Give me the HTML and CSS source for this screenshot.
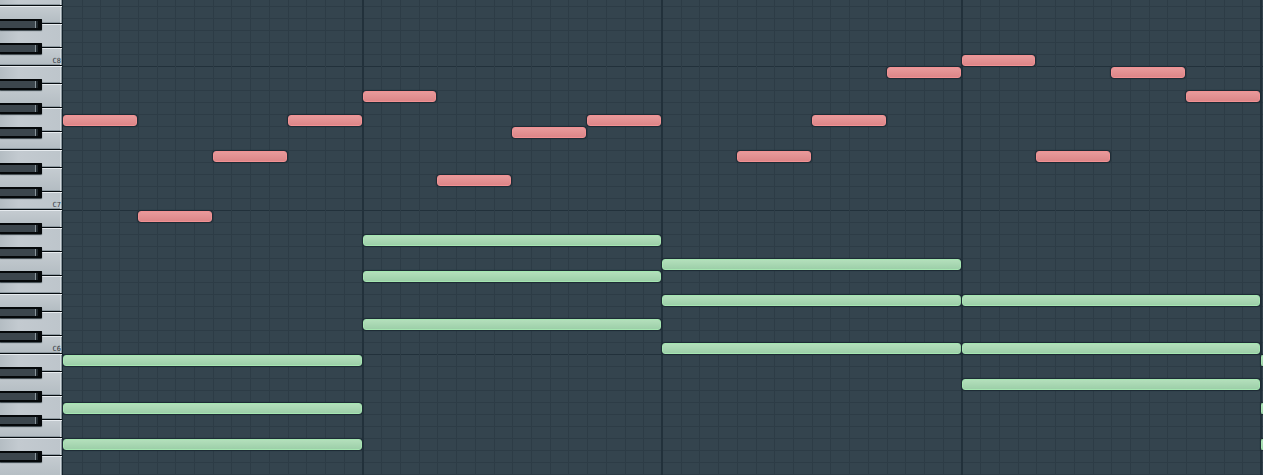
FILE: index.html
```html
<!DOCTYPE html>
<html lang="en">
<head>
<meta charset="utf-8">
<meta name="viewport" content="width=device-width, initial-scale=1">
<title>Piano roll</title>
<link rel="stylesheet" href="styles.css">
</head>
<body>
<main class="piano-roll">
  <div class="keyboard" id="keyboard"></div>
  <div class="roll" id="roll"></div>
</main>
<script src="roll.js"></script>
</body>
</html>
```

FILE: styles.css
```css
* {
  box-sizing: border-box;
}

body {
  margin: 0;
  background: #34444e;
  font-family: "DejaVu Sans Mono", monospace;
}

.piano-roll {
  display: flex;
  height: 100vh;
  overflow: hidden;
}

/* Keyboard */

.keyboard {
  flex: none;
  width: 63px;
  background: #14222b;
}

.key {
  position: relative;
  width: 62px;
  height: 18px;
  border-bottom: 1px solid #060c10;
  box-shadow: inset 0 1px #e6ebef, inset -1px 0 #8b979e, inset -2px 0 #d3dade, inset 0 -1px #8d989f;
  background: linear-gradient(to right, #b4bdc3, #c3cad0 30%, #bdc5cb);
}

.key:nth-child(even) {
  background: linear-gradient(#c5ccd1, #b3bcc2);
}

.key.tall {
  height: 24px;
}

.key.cut {
  height: 6px;
  box-shadow: inset -1px 0 #8b979e, inset -2px 0 #d3dade, inset 0 -1px #8d989f;
}

.white {
  display: flex;
  align-items: flex-end;
  justify-content: flex-end;
  width: 100%;
  height: 100%;
  padding: 0 1px 0 0;
  border: 0;
  background: none;
  color: #30383d;
  font: 7px/8px "DejaVu Sans Mono", monospace;
}

.black {
  position: absolute;
  z-index: 1;
  left: 0;
  bottom: -7px;
  width: 42px;
  height: 11px;
  padding: 0;
  border: 2px solid #05080a;
  border-width: 2px 4px 2px 0;
  border-radius: 0 1px 1px 0;
  background: linear-gradient(to right, #3c464d 35px, #89949a 35px, #89949a 36px, #20282d 36px);
  box-shadow: 0 1px 1px #3a444a;
}

/* Note canvas */

.roll {
  flex: 1;
  min-width: 0;
  display: grid;
  grid-template-columns: repeat(64, minmax(0, 1fr)) 2px;
  grid-template-rows: 6px;
  grid-auto-rows: 12px;
  background: #34444e;
}

.row-line {
  grid-column: 1 / -1;
  border-top: 1px solid #2d3c46;
}

.row-line.octave {
  border-color: #22313b;
}

.step-line {
  grid-row: 1 / 42;
  border-left: 1px solid #2d3c46;
}

.step-line.bar {
  margin-left: -1px;
  border-left: 2px solid #22313b;
}

.note {
  margin: 1px 1px 0 0;
  border: 1px solid #f29193;
  border-radius: 3px;
  background: linear-gradient(#e89a9b, #dd8688);
  box-shadow: 0 0 1px 1px #1d2a33;
}

.note.pad {
  border-color: #a5e6b1;
  background: linear-gradient(#b3dfbb, #9dcfa9);
}

.note.next {
  margin-right: 0;
  border-right: 0;
  border-radius: 3px 0 0 3px;
}
```

FILE: roll.js
```
const keyboard = document.getElementById("keyboard");
const roll = document.getElementById("roll");

// White keys from top to bottom; a sharp overlaps the lower edge of its key.
const octave = [
  { name: "B", tall: false, sharp: true },
  { name: "A", tall: true, sharp: true },
  { name: "G", tall: true, sharp: true },
  { name: "F", tall: false, sharp: false },
  { name: "E", tall: false, sharp: true },
  { name: "D", tall: true, sharp: true },
  { name: "C", tall: false, sharp: false },
];

function addKey(key, number, cut) {
  const slot = document.createElement("div");
  slot.className = "key" + (key.tall ? " tall" : "") + (cut ? " cut" : "");
  const white = document.createElement("button");
  white.className = "white";
  white.setAttribute("aria-label", key.name + number);
  if (key.name === "C") white.textContent = key.name + number;
  slot.append(white);
  if (key.sharp) {
    const black = document.createElement("button");
    black.className = "black";
    black.setAttribute("aria-label", "Sharp below " + key.name + number);
    slot.append(black);
  }
  keyboard.append(slot);
}

addKey(octave[3], 8, true);
octave.slice(4).forEach((key) => addKey(key, 8));
for (const number of [7, 6]) octave.forEach((key) => addKey(key, number));
octave.slice(0, 6).forEach((key) => addKey(key, 5));

function addCell(className, row, column) {
  const cell = document.createElement("div");
  cell.className = className;
  if (row) cell.style.gridRow = row;
  if (column) cell.style.gridColumn = column;
  roll.append(cell);
}

for (let row = 2; row <= 41; row++) {
  addCell("row-line" + (row % 12 === 7 ? " octave" : ""), row);
}
for (let step = 2; step <= 65; step++) {
  addCell("step-line" + (step % 16 === 1 ? " bar" : ""), null, step);
}

// [row, first step]
const melody = [
  [11, 1], [19, 5], [14, 9], [11, 13],
  [9, 17], [16, 21], [12, 25], [11, 29],
  [14, 37], [11, 41], [7, 45],
  [6, 49], [14, 53], [7, 57], [9, 61],
];
const chords = [
  [31, 1], [35, 1], [38, 1],
  [21, 17], [24, 17], [28, 17],
  [23, 33], [26, 33], [30, 33],
  [26, 49], [30, 49], [33, 49],
];

melody.forEach(([row, start]) => addCell("note", row, start + " / span 4"));
chords.forEach(([row, start]) => addCell("note pad", row, start + " / span 16"));
[31, 35, 38].forEach((row) => addCell("note pad next", row, "65"));
```
